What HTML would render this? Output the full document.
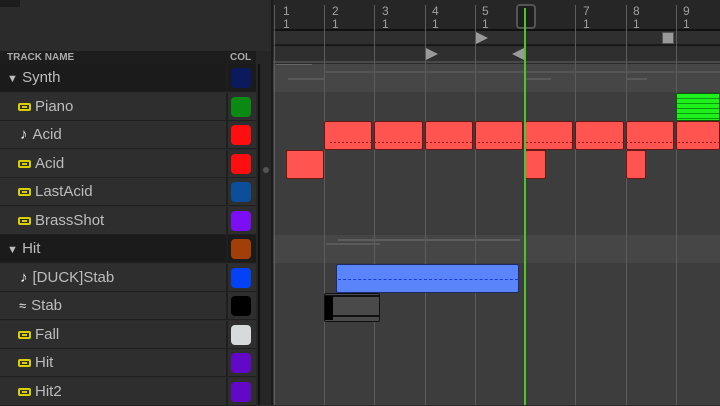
<!DOCTYPE html><html><head><style>
*{margin:0;padding:0;box-sizing:border-box}
body{width:720px;height:405px;overflow:hidden;background:#2b2b2b;font-family:"Liberation Sans","DejaVu Sans",sans-serif;position:relative}
.a{position:absolute}
.row{position:absolute;left:0;width:256px;height:28px;border-bottom:1px solid #1f1f1f;color:#bdbdbd;font-size:15px;line-height:28px}
.sw{position:absolute;left:231px;top:4px;width:20px;height:20px;border-radius:4px}
.col{position:absolute;left:226px;top:0;width:2px;height:28px;background:#1f1f1f}
.ico{position:absolute;left:18px;top:10px;width:13px;height:8px;border:2px solid #d8d000;border-radius:2px}
.ico:after{content:"";position:absolute;left:2px;top:1px;width:5px;height:2px;background:#d8d000}
.red{position:absolute;background:#ff5450;border:1px solid #6a1614;border-radius:2px;height:29px}
.vl{position:absolute;width:1px;background:#5c5c5c}
.num{position:absolute;color:#a0a0a0;font-size:12px;line-height:13px}
</style></head><body>
<div class="a" style="left:0;top:0;width:20px;height:7px;background:#1c1c1c"></div>
<div class="a" style="left:0;top:51px;width:256px;height:13px;background:#1d1d1d;color:#aaa;font-size:10px;font-weight:bold;line-height:13px"><span style="margin-left:7px">TRACK NAME</span><span class="a" style="left:230px">COL</span></div>
<div class="a" style="left:256px;top:51px;width:17px;height:354px;background:#262626"></div>
<div class="a" style="left:258px;top:64px;width:2px;height:341px;background:#111"></div>
<div class="a" style="left:263px;top:167px;width:6px;height:6px;border-radius:3px;background:#555"></div>
<div class="a" style="left:271px;top:0;width:2px;height:405px;background:#1a1a1a"></div>

<div class="row" style="top:64px;background:#1b1b1b"><span style="margin-left:7px;font-size:11px">▼</span> <span>Synth</span><div class="col"></div><div class="sw" style="background:#0a1a5c"></div></div>
<div class="row" style="top:92.5px;background:#2e2e2e"><div class="ico"></div><span style="margin-left:35px">Piano</span><div class="col"></div><div class="sw" style="background:#0a8a12"></div></div>
<div class="row" style="top:121px;background:#2e2e2e"><span style="margin-left:20px;color:#eee">♪</span><span style="margin-left:5px">Acid</span><div class="col"></div><div class="sw" style="background:#fe0e0e"></div></div>
<div class="row" style="top:149.5px;background:#2e2e2e"><div class="ico"></div><span style="margin-left:35px">Acid</span><div class="col"></div><div class="sw" style="background:#fe0e0e"></div></div>
<div class="row" style="top:178px;background:#2e2e2e"><div class="ico"></div><span style="margin-left:35px">LastAcid</span><div class="col"></div><div class="sw" style="background:#0b4f9a"></div></div>
<div class="row" style="top:206.5px;background:#2e2e2e"><div class="ico"></div><span style="margin-left:35px">BrassShot</span><div class="col"></div><div class="sw" style="background:#7b0ef5"></div></div>
<div class="row" style="top:235px;background:#1b1b1b"><span style="margin-left:7px;font-size:11px">▼</span> <span>Hit</span><div class="col"></div><div class="sw" style="background:#a23e08"></div></div>
<div class="row" style="top:263.5px;background:#2e2e2e"><span style="margin-left:20px;color:#eee">♪</span><span style="margin-left:5px">[DUCK]Stab</span><div class="col"></div><div class="sw" style="background:#0442f5"></div></div>
<div class="row" style="top:292px;background:#2e2e2e"><span style="margin-left:19px;color:#eee;font-size:13px">≈</span><span style="margin-left:5px">Stab</span><div class="col"></div><div class="sw" style="background:#000"></div></div>
<div class="row" style="top:320.5px;background:#2e2e2e"><div class="ico"></div><span style="margin-left:35px">Fall</span><div class="col"></div><div class="sw" style="background:#d6dada"></div></div>
<div class="row" style="top:349px;background:#2e2e2e"><div class="ico"></div><span style="margin-left:35px">Hit</span><div class="col"></div><div class="sw" style="background:#6408c8"></div></div>
<div class="row" style="top:377.5px;background:#2e2e2e"><div class="ico"></div><span style="margin-left:35px">Hit2</span><div class="col"></div><div class="sw" style="background:#6408c8"></div></div>

<div class="a" style="left:273px;top:0;width:447px;height:31px;background:#262626;border-bottom:2px solid #111"></div>
<div class="a" style="left:273px;top:31px;width:447px;height:15px;background:#2f2f2f;border-bottom:2px solid #1a1a1a"></div>
<div class="a" style="left:273px;top:47px;width:447px;height:16px;background:#2f2f2f;border-bottom:2px solid #4a4a4a"></div>
<div class="a" style="left:273px;top:64px;width:447px;height:341px;background:#3d3d3d"></div>
<div class="a" style="left:273px;top:64px;width:447px;height:28px;background:#464646"></div>
<div class="a" style="left:273px;top:235px;width:447px;height:28px;background:#464646"></div>
<div class="a" style="left:276px;top:64px;width:36px;height:1px;background:#666"></div>
<div class="a" style="left:288px;top:78px;width:37px;height:2px;background:#595959"></div>
<div class="a" style="left:325px;top:71px;width:395px;height:2px;background:#555"></div>
<div class="a" style="left:525px;top:78px;width:26px;height:2px;background:#595959"></div>
<div class="a" style="left:627px;top:78px;width:20px;height:2px;background:#595959"></div>
<div class="a" style="left:338px;top:239px;width:182px;height:2px;background:#5e5e5e"></div>
<div class="a" style="left:326px;top:243px;width:54px;height:2px;background:#5a5a5a"></div>

<div class="vl" style="left:274px;top:5px;height:400px"></div>
<div class="vl" style="left:324px;top:5px;height:400px"></div>
<div class="vl" style="left:374px;top:5px;height:400px"></div>
<div class="vl" style="left:425px;top:5px;height:400px"></div>
<div class="vl" style="left:475px;top:5px;height:400px"></div>
<div class="vl" style="left:575px;top:5px;height:400px"></div>
<div class="vl" style="left:626px;top:5px;height:400px"></div>
<div class="vl" style="left:676px;top:5px;height:400px"></div>
<div class="num" style="left:283px;top:5px">1<br>1</div>
<div class="num" style="left:332px;top:5px">2<br>1</div>
<div class="num" style="left:382px;top:5px">3<br>1</div>
<div class="num" style="left:432px;top:5px">4<br>1</div>
<div class="num" style="left:482px;top:5px">5<br>1</div>
<div class="num" style="left:583px;top:5px">7<br>1</div>
<div class="num" style="left:633px;top:5px">8<br>1</div>
<div class="num" style="left:683px;top:5px">9<br>1</div>
<div class="a" style="left:516px;top:4px;width:20px;height:25px;border:2px solid #555;border-radius:4px;background:#1e1e1e"></div>
<div class="a" style="left:476px;top:32px;width:0;height:0;border-left:12px solid #9a9a9a;border-top:6px solid transparent;border-bottom:6px solid transparent"></div>
<div class="a" style="left:662px;top:32px;width:12px;height:12px;background:#9a9a9a;border:1px solid #555"></div>
<div class="a" style="left:426px;top:48px;width:0;height:0;border-left:12px solid #9a9a9a;border-top:6px solid transparent;border-bottom:6px solid transparent"></div>
<div class="a" style="left:512px;top:48px;width:0;height:0;border-right:12px solid #9a9a9a;border-top:6px solid transparent;border-bottom:6px solid transparent"></div>

<div class="a" style="left:676px;top:93px;width:44px;height:28px;background:#1ef01e;border:1px solid #0a5a0a;background-image:repeating-linear-gradient(to bottom,transparent 0 4px,#0a9a0a 4px 5px);"></div>
<div class="red" style="left:324px;top:121px;width:48px"></div>
<div class="red" style="left:374px;top:121px;width:49px"></div>
<div class="red" style="left:425px;top:121px;width:48px"></div>
<div class="red" style="left:475px;top:121px;width:48px"></div>
<div class="red" style="left:525px;top:121px;width:48px"></div>
<div class="red" style="left:575px;top:121px;width:49px"></div>
<div class="red" style="left:626px;top:121px;width:48px"></div>
<div class="red" style="left:676px;top:121px;width:44px"></div>
<div class="a" style="left:330px;top:142px;width:390px;height:1px;background:repeating-linear-gradient(to right,#a01010 0 2px,transparent 2px 4px)"></div>
<div class="red" style="left:286px;top:150px;width:38px"></div>
<div class="red" style="left:525px;top:150px;width:21px"></div>
<div class="red" style="left:626px;top:150px;width:20px"></div>
<div class="a" style="left:336px;top:264px;width:183px;height:29px;background:#5a84fa;border:1px solid #1a2a6a;border-radius:2px"></div>
<div class="a" style="left:338px;top:279px;width:180px;height:1px;border-top:1px dashed #1a3bd8"></div>
<div class="a" style="left:324px;top:293px;width:56px;height:29px;background:#4a4a4a;border:1px solid #111;border-radius:2px"></div>
<div class="a" style="left:325px;top:295px;width:54px;height:2px;background:#111"></div>
<div class="a" style="left:325px;top:315px;width:54px;height:2px;background:#111"></div>
<div class="a" style="left:325px;top:296px;width:8px;height:24px;background:#000"></div>
<div class="a" style="left:524px;top:8px;width:2px;height:397px;background:#4fc32a"></div>
</body></html>
